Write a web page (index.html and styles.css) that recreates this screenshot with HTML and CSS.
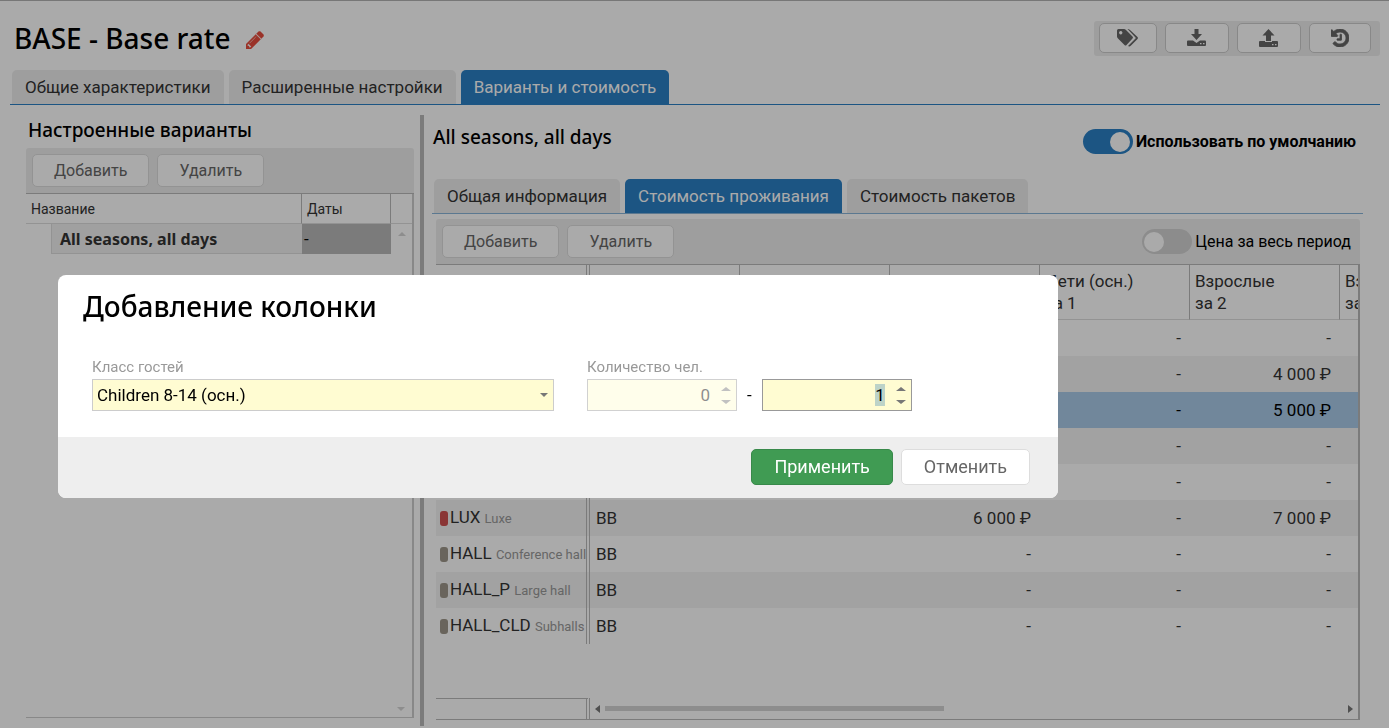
FILE: index.html
```html
<!DOCTYPE html>
<html lang="ru">

<head>
    <meta charset="utf-8">
    <meta name="viewport" content="width=device-width, initial-scale=1">
    <title>BASE - Base rate</title>
    <link rel="stylesheet" href="styles.css">
</head>

<body>

    <header class="header">
        <h1 class="title">BASE - Base rate
            <a href="#" class="edit" aria-label="Изменить">
                <svg width="18" height="18" viewBox="0 0 1536 1536"><path d="M363 1408l91-91-235-235-91 91v107h128v128h107zM886 480q0-22-22-22-10 0-17 7l-542 542q-7 7-7 17 0 22 22 22 10 0 17-7l542-542q7-7 7-17zM832 288l416 416-832 832H0v-416zM1515 384q0 53-37 90l-166 166-416-416 166-165q36-38 90-38 53 0 91 38l235 234q37 39 37 91z" fill="#e74c3c" stroke="#e74c3c" stroke-width="30"/></svg>
            </a>
        </h1>
        <div class="tools">
            <button class="btn tool tags" aria-label="Метки">
                <svg width="22" height="18" viewBox="0 0 22 18"><path d="M0 1.500Q0 0 1.500 0H7q1 0 2 1l6.500 6.500q1 1 0 2L9.500 16q-1 1-2 0L1 9.500Q0 8.500 0 7.500zM3.700 2a1.700 1.700 0 1 0 .1 0z" fill="#666" fill-rule="evenodd"/><path d="M10.500 0q1.500 0 2.500 1l7.500 7q1 1 0 2L14 16.500q-1.500 1.500-3 .5l7.500-7.500q.5-.5 0-1z" fill="#666"/></svg>
            </button>
            <button class="btn tool" aria-label="Скачать">
                <svg width="20" height="18" viewBox="0 0 20 18"><path d="M7.500 0h4v5H15l-5.500 6L4 5h3.500zM0 12.500Q0 11.500 1 11.500h5l3.500 2.500 3.500-2.500h5q1 0 1 1V16q0 1-1 1H1q-1 0-1-1zM13 14v1.300h1.500V14zM16 14v1.300h1.500V14z" fill="#666" fill-rule="evenodd"/></svg>
            </button>
            <button class="btn tool" aria-label="Загрузить">
                <svg width="20" height="18" viewBox="0 0 20 18"><path d="M9.500 0L15.500 6.500H12V12H7V6.500H3.500zM0 13q0-1 1-1h5v1h7v-1h5q1 0 1 1v4q0 1-1 1H1q-1 0-1-1zM13 15v1.300h1.500V15zM16 15v1.300h1.500V15z" fill="#666" fill-rule="evenodd"/></svg>
            </button>
            <button class="btn tool" aria-label="История">
                <svg width="18" height="18" viewBox="0 128 1536 1536"><path d="M1536 896q0 156-61 298t-164 245-245 164-298 61q-172 0-327-72.500T177 1387q-7-10-6.500-22.500t8.500-20.500l137-138q10-9 25-9 16 2 23 12 73 95 179 147t225 52q104 0 198.500-40.500T1130 1258t109.500-163.500T1280 896t-40.500-198.500T1130 534 966.500 424.500 768 384q-98 0-188 35.500T420 521l137 138q31 30 14 69-17 40-59 40H64q-26 0-45-19T0 704V256q0-42 40-59 39-17 69 14l130 129q107-101 244.500-156.500T768 128q156 0 298 61t245 164 164 245 61 298zM896 608v448q0 14-9 23t-23 9H544q-14 0-23-9t-9-23v-64q0-14 9-23t23-9h224V608q0-14 9-23t23-9h64q14 0 23 9t9 23z" fill="#666" stroke="#666" stroke-width="70"/></svg>
            </button>
        </div>
    </header>

    <nav class="tabs">
        <a href="#" class="tab">Общие характеристики</a>
        <a href="#" class="tab">Расширенные настройки</a>
        <a href="#" class="tab active">Варианты и стоимость</a>
    </nav>

    <main class="split">
        <section class="variants">
            <h2>Настроенные варианты</h2>
            <div class="bar">
                <button class="btn">Добавить</button>
                <button class="btn">Удалить</button>
            </div>
            <div class="tree">
                <table>
                    <colgroup><col class="indent"><col><col class="dates"><col class="last"></colgroup>
                    <thead>
                        <tr><th colspan="2">Название</th><th>Даты</th><th></th></tr>
                    </thead>
                    <tbody>
                        <tr><td></td><td class="name">All seasons, all days</td><td class="date">-</td><td class="gutter"><span class="arrow up"></span></td></tr>
                    </tbody>
                </table>
                <span class="arrow down"></span>
            </div>
        </section>

        <div class="splitter"></div>

        <section class="details">
            <div class="details-head">
                <h2>All seasons, all days</h2>
                <label class="switch strong"><input type="checkbox" checked>Использовать по умолчанию</label>
            </div>
            <nav class="tabs light">
                <a href="#" class="tab">Общая информация</a>
                <a href="#" class="tab active">Стоимость проживания</a>
                <a href="#" class="tab">Стоимость пакетов</a>
            </nav>
            <div class="bar">
                <button class="btn">Добавить</button>
                <button class="btn">Удалить</button>
                <label class="switch"><input type="checkbox">Цена за весь период</label>
            </div>
            <div class="grid">
                <table class="prices">
                    <colgroup><col class="room"><col span="6"></colgroup>
                    <thead>
                        <tr><th></th><th></th><th></th><th>Взрослые<br>за 1</th><th>Дети (осн.)<br>за 1</th><th>Взрослые<br>за 2</th><th>Взрослые<br>за 3</th></tr>
                    </thead>
                    <tbody>
                        <tr><td></td><td></td><td></td><td></td><td>-</td><td>-</td><td></td></tr>
                        <tr><td></td><td></td><td></td><td></td><td>-</td><td>4 000 ₽</td><td></td></tr>
                        <tr class="selected"><td></td><td></td><td></td><td></td><td>-</td><td>5 000 ₽</td><td></td></tr>
                        <tr><td></td><td></td><td></td><td></td><td>-</td><td>-</td><td></td></tr>
                        <tr><td></td><td></td><td></td><td></td><td>-</td><td>-</td><td></td></tr>
                        <tr><td><i class="mark red"></i>LUX <small>Luxe</small></td><td>BB</td><td></td><td>6 000 ₽</td><td>-</td><td>7 000 ₽</td><td></td></tr>
                        <tr><td><i class="mark"></i>HALL <small>Conference hall</small></td><td>BB</td><td></td><td>-</td><td>-</td><td>-</td><td></td></tr>
                        <tr><td><i class="mark"></i>HALL_P <small>Large hall</small></td><td>BB</td><td></td><td>-</td><td>-</td><td>-</td><td></td></tr>
                        <tr><td><i class="mark"></i>HALL_CLD <small>Subhalls</small></td><td>BB</td><td></td><td>-</td><td>-</td><td>-</td><td></td></tr>
                    </tbody>
                </table>
                <div class="scroll">
                    <div class="corner"></div>
                    <span class="arrow left"></span>
                    <div class="track"><div class="thumb"></div></div>
                    <span class="arrow right"></span>
                </div>
            </div>
        </section>
    </main>

    <div class="overlay">
        <form class="dialog" role="dialog" aria-labelledby="dlg">
            <div class="dialog-body">
                <h2 id="dlg">Добавление колонки</h2>
                <div class="fields">
                    <div class="field wide">
                        <label for="guests">Класс гостей</label>
                        <div class="select">
                            <select id="guests"><option>Children 8-14 (осн.)</option></select>
                            <span class="arrow down"></span>
                        </div>
                    </div>
                    <div class="field">
                        <label for="to">Количество чел.</label>
                        <div class="range">
                            <div class="spin disabled">
                                <input type="text" id="from" value="0" aria-label="От" disabled>
                                <div class="steps"><button type="button" aria-label="Больше" disabled><span class="arrow up"></span></button><button type="button" aria-label="Меньше" disabled><span class="arrow down"></span></button></div>
                            </div>
                            <span>-</span>
                            <div class="spin">
                                <input type="text" id="to" value="1">
                                <div class="steps"><button type="button" aria-label="Больше"><span class="arrow up"></span></button><button type="button" aria-label="Меньше"><span class="arrow down"></span></button></div>
                            </div>
                        </div>
                    </div>
                </div>
            </div>
            <div class="dialog-foot">
                <button type="button" class="btn ok">Применить</button>
                <button type="button" class="btn">Отменить</button>
            </div>
        </form>
    </div>

    <script>
        document.getElementById('to').select();
    </script>
</body>

</html>
```
FILE: styles.css
```css
* {
    box-sizing: border-box;
}

:root {
    --blue: #2b80c5;
    --line: #b9b9b9;
    --bar: #eee;
    --text: #333;
}

body {
    margin: 0;
    height: 100vh;
    overflow: hidden;
    display: flex;
    flex-direction: column;
    padding: 0 9px 2px 10px;
    border-top: 1px solid #b3b3b3;
    background: #fff;
    color: var(--text);
    font: 17px/22px Roboto, "Noto Sans", sans-serif;
}

h1, h2 {
    margin: 0;
    color: #000;
    font-family: "Noto Sans", sans-serif;
    font-weight: 500;
}

button, input, select {
    font: inherit;
}

/* header */
.header {
    display: flex;
    justify-content: space-between;
    align-items: flex-start;
    height: 69px;
    padding: 20px 0 0 4px;
}

.title {
    font-size: 28px;
    line-height: 34px;
}

.edit {
    margin-left: 8px;
}

.tools {
    display: flex;
    gap: 8px;
    padding: 2px 9px 2px 5px;
    height: 35px;
    border-radius: 3px;
    background: var(--bar);
}

.btn {
    height: 33px;
    padding: 0 21px;
    border: 1px solid #ddd;
    border-radius: 5px;
    background: #fff;
    color: #666;
    font-size: 16px;
}

.tool {
    height: 30px;
    border-color: #ccc;
    line-height: 0;
}

.tags {
    padding: 0 17px;
}

/* tabs */
.tabs {
    display: flex;
    gap: 5px;
    padding-left: 2px;
    border-bottom: 1px solid var(--blue);
}

.tab {
    height: 34px;
    padding: 0 13px;
    border-radius: 5px 5px 0 0;
    background: var(--bar);
    color: #333;
    line-height: 34px;
    text-decoration: none;
}

.tab.active {
    background: var(--blue);
    color: #fff;
}

.light {
    border-color: #89b4d9;
}

.bar {
    display: flex;
    align-items: center;
    gap: 8px;
    height: 46px;
    padding: 0 6px;
    border-radius: 3px 3px 0 0;
    border-bottom: 1px solid var(--line);
    background: var(--bar);
}

/* panes */
.split {
    flex: 1;
    min-height: 0;
    display: flex;
    padding-top: 10px;
}

.variants {
    display: flex;
    flex-direction: column;
    width: 404px;
    padding: 0 0 8px 16px;
}

.variants h2, .details h2 {
    font-size: 19px;
    line-height: 30px;
}

.variants h2 {
    padding: 0 2px 3px;
}

.splitter {
    width: 4px;
    margin: 0 8px 0 6px;
    background: var(--line);
}

.tree {
    flex: 1;
    display: flex;
    flex-direction: column;
    justify-content: space-between;
    border: solid #ccc;
    border-width: 0 2px 1px 0;
}

.tree > .arrow {
    align-self: flex-end;
    margin: 0 7px 6px;
    color: #d4d4d4;
}

table {
    width: 100%;
    table-layout: fixed;
    border-collapse: separate;
    border-spacing: 0;
}

th {
    font-weight: normal;
    text-align: left;
    border-right: 1px solid var(--line);
}

.tree th {
    height: 30px;
    padding: 0 5px;
    border-bottom: 1px solid #ddd;
    font-size: 14px;
}

.tree th:last-child {
    border-right: 0;
}

.tree td {
    height: 30px;
    padding: 0;
}

.indent {
    width: 25px;
}

.dates {
    width: 89px;
}

.last {
    width: 21px;
}

.tree .gutter {
    padding-left: 7px;
    vertical-align: top;
    line-height: 12px;
    color: #d4d4d4;
}

.tree .name {
    padding-left: 8px;
    border: solid #ddd;
    border-width: 0 0 1px 1px;
    background: #f0f0f0;
    font-family: "Noto Sans", sans-serif;
    font-size: 16px;
    font-weight: bold;
}

.tree .date {
    padding-left: 2px;
    background: var(--line);
    color: #000;
}

.details {
    flex: 1;
    min-width: 0;
    display: flex;
    flex-direction: column;
    padding: 0 17px 6px 0;
}

.details-head {
    display: flex;
    justify-content: space-between;
    align-items: flex-start;
    height: 64px;
    padding: 7px 7px 0 1px;
}

.details-head .switch {
    padding-top: 7px;
}

.details .bar {
    margin: 5px 3px 0 4px;
}

.switch {
    display: flex;
    align-items: center;
    gap: 3px;
    margin-left: auto;
    color: #000;
    font-size: 16px;
}

.details .bar .switch {
    padding-right: 3px;
}

.strong {
    font-weight: bold;
}

.switch input {
    appearance: none;
    width: 50px;
    height: 25px;
    margin: 0;
    padding: 3px 2px;
    border-radius: 13px;
    background: #d2d2d2;
}

.switch input::before {
    content: "";
    display: block;
    width: 20px;
    height: 20px;
    border-radius: 50%;
    background: #fff;
}

.switch input:checked {
    background: var(--blue);
}

.switch input:checked::before {
    margin-left: 25px;
}

.grid {
    flex: 1;
    min-height: 0;
    display: flex;
    flex-direction: column;
    justify-content: space-between;
    overflow: hidden;
    margin: 0 3px 0 4px;
    border: solid var(--line);
    border-width: 0 2px 1px 0;
}

.prices {
    width: 1054px;
}

.prices .room {
    width: 154px;
}

.prices th {
    height: 55px;
    padding: 0 5px;
    border-bottom: 1px solid #ddd;
}

.prices td {
    height: 36px;
    padding: 0 9px 0 4px;
    text-align: right;
    white-space: nowrap;
}

.prices td:nth-child(1), .prices td:nth-child(2) {
    text-align: left;
}

.prices td:nth-child(2) {
    padding-left: 6px;
}

.prices td:first-child, .prices th:first-child {
    padding-right: 0;
    border-right: 4px double var(--line);
}

.prices tbody tr:nth-child(even) td {
    background: #f3f3f3;
}

.prices tbody .selected td {
    background: #aacbe9;
    color: #000;
}

.prices small {
    color: #999;
    font-size: 13px;
}

.mark {
    display: inline-block;
    width: 8px;
    height: 15px;
    margin-right: 2px;
    border-radius: 3px;
    background: #9e978a;
    vertical-align: middle;
}

.mark.red {
    background: #d05050;
}

.scroll {
    display: flex;
    align-items: center;
    height: 21px;
    padding-right: 5px;
}

.corner {
    flex: none;
    width: 154px;
    height: 21px;
    margin-right: 5px;
    border-top: 1px solid var(--line);
    border-right: 4px double var(--line);
}

.track {
    flex: 1;
    margin: 0 5px;
}

.thumb {
    width: 46%;
    height: 5px;
    background: #d4d4d4;
}

.scroll .arrow {
    color: #777;
}

/* little triangles, coloured by the text colour */
.arrow {
    display: inline-block;
    border: 4px solid transparent;
}

.arrow.up {
    border-top: 0;
    border-bottom: 4px solid;
}

.arrow.down {
    border-bottom: 0;
    border-top: 4px solid;
}

.arrow.left {
    border-left: 0;
    border-right: 5px solid;
}

.arrow.right {
    border-right: 0;
    border-left: 5px solid;
}

/* dialog */
.overlay {
    position: fixed;
    inset: 0;
    padding: 275px 58px 0;
    background: rgba(0, 0, 0, .333);
}

.dialog {
    max-width: 1000px;
    overflow: hidden;
    border-radius: 8px;
    background: #fff;
    color: #000;
}

.dialog-body {
    padding: 12px 25px 26px;
}

.dialog h2 {
    font-size: 28px;
    line-height: 38px;
}

.fields {
    display: flex;
    gap: 33px;
    padding: 31px 9px 0;
}

.field label {
    display: block;
    color: #999;
    font-size: 15px;
    line-height: 23px;
}

.wide {
    width: 462px;
}

.select, .spin {
    display: flex;
    align-items: center;
    height: 32px;
    border: 1px solid #ccc;
    background: #fffcd2;
    color: #777;
}

.select {
    padding-right: 5px;
}

.select select {
    flex: 1;
    appearance: none;
    padding: 0 4px;
    border: 0;
    outline: 0;
    background: none;
    color: #000;
}

.range {
    display: flex;
    align-items: center;
    gap: 10px;
}

.spin {
    width: 150px;
    border-color: #999;
}

.spin input {
    flex: 1;
    min-width: 0;
    padding: 0;
    border: 0;
    outline: 0;
    background: none;
    color: #000;
    text-align: right;
}

.spin input::selection {
    background: #bdd3c8;
    color: #000;
}

.spin.disabled {
    opacity: .45;
}

.steps {
    display: flex;
    flex-direction: column;
    width: 26px;
    padding-left: 6px;
}

.steps button {
    display: flex;
    align-items: center;
    justify-content: center;
    width: 20px;
    height: 13px;
    padding: 0;
    border: 0;
    background: none;
    color: #777;
}

.steps .arrow {
    border-left-width: 5px;
    border-right-width: 5px;
}

.dialog-foot {
    display: flex;
    justify-content: flex-end;
    gap: 8px;
    padding: 12px 28px 13px;
    background: #eee;
}

.dialog-foot .btn {
    height: 36px;
    padding: 0 22px;
    font-size: 18px;
}

.dialog-foot .ok {
    border-color: #38894a;
    background: #409b53;
    color: #fff;
}
```
